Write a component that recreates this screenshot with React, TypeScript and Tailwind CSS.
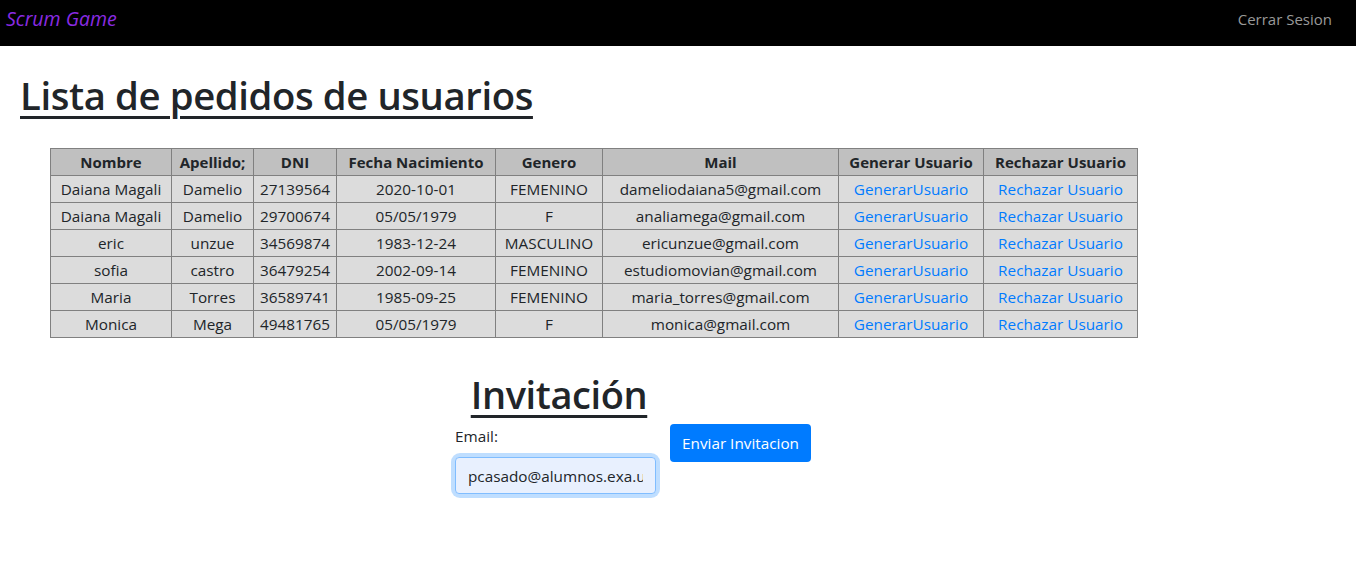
import React from "react";

const rows = [
  ["Daiana Magali", "Damelio", "27139564", "2020-10-01", "FEMENINO", "dameliodaiana5@gmail.com"],
  ["Daiana Magali", "Damelio", "29700674", "05/05/1979", "F", "analiamega@gmail.com"],
  ["eric", "unzue", "34569874", "1983-12-24", "MASCULINO", "ericunzue@gmail.com"],
  ["sofia", "castro", "36479254", "2002-09-14", "FEMENINO", "estudiomovian@gmail.com"],
  ["Maria", "Torres", "36589741", "1985-09-25", "FEMENINO", "maria_torres@gmail.com"],
  ["Monica", "Mega", "49481765", "05/05/1979", "F", "monica@gmail.com"],
];

const headers = ["Nombre", "Apellido;", "DNI", "Fecha Nacimiento", "Genero", "Mail", "Generar Usuario", "Rechazar Usuario"];
const widths = [121, 82, 83, 159, 107, 236, 145, 154];

export default function App() {
  return (
    <div className="min-h-[576px] bg-white text-[#212529] font-['Open_Sans',sans-serif]">
      <nav className="h-[46px] bg-black flex items-start justify-between pl-[6px] pr-[24px] pt-[6px]">
        <span className="italic text-[19.5px] leading-[26px] text-[#8a2be2]">Scrum Game</span>
        <span className="text-[15px] leading-[26px] text-[#999999]">Cerrar Sesion</span>
      </nav>
      <h1 className="ml-[20px] mt-[25px] text-[38.3px] leading-[48px] font-semibold tracking-[-0.4px] underline underline-offset-[6px] decoration-[3px]">
        Lista de pedidos de usuarios
      </h1>
      <table className="ml-[50px] mt-[29px] border-collapse table-fixed w-[1088px] text-[15.3px]">
        <colgroup>
          {widths.map((w, i) => (
            <col key={i} style={{ width: w }} />
          ))}
        </colgroup>
        <thead>
          <tr className="bg-[#c0c0c0]">
            {headers.map((h) => (
              <th key={h} className="border border-[#808080] px-0 py-px leading-[24px] font-bold text-[15px] text-center whitespace-nowrap">
                {h}
              </th>
            ))}
          </tr>
        </thead>
        <tbody>
          {rows.map((r, i) => (
            <tr key={i} className="bg-[#dcdcdc]">
              {r.map((c, j) => (
                <td key={j} className="border border-[#808080] px-0 py-px leading-[24px] text-center whitespace-nowrap">
                  {c}
                </td>
              ))}
              <td className="border border-[#808080] px-0 py-px leading-[24px] text-center text-[#007bff] whitespace-nowrap">GenerarUsuario</td>
              <td className="border border-[#808080] px-0 py-px leading-[24px] text-center text-[#007bff] whitespace-nowrap">Rechazar Usuario</td>
            </tr>
          ))}
        </tbody>
      </table>
      <div className="ml-[455px] mt-[32px]">
        <div className="w-[208px] text-center">
          <span className="text-[38px] leading-[48px] font-semibold tracking-[-0.4px] underline underline-offset-[6px] decoration-[3px]">Invitación</span>
        </div>
        <div className="flex items-start gap-[14px] mt-[4px]">
          <div className="flex flex-col">
            <label className="text-[15.3px] leading-[24px] mt-[2px]">Email:</label>
            <div className="mt-[9px] rounded-[5px] ring-4 ring-[#80bdff]/50 w-[201px] h-[37px]">
              <input
                defaultValue="pcasado@alumnos.exa.unicen.edu.ar"
                className="w-full h-full rounded-[4px] border border-[#80bdff] bg-[#e8f0fe] px-[12px] text-[15.3px] text-[#212529] outline-none"
              />
            </div>
          </div>
          <button className="mt-[2px] h-[38px] px-[12px] rounded-[4px] bg-[#007bff] text-white text-[15.3px]">
            Enviar Invitacion
          </button>
        </div>
      </div>
    </div>
  );
}
